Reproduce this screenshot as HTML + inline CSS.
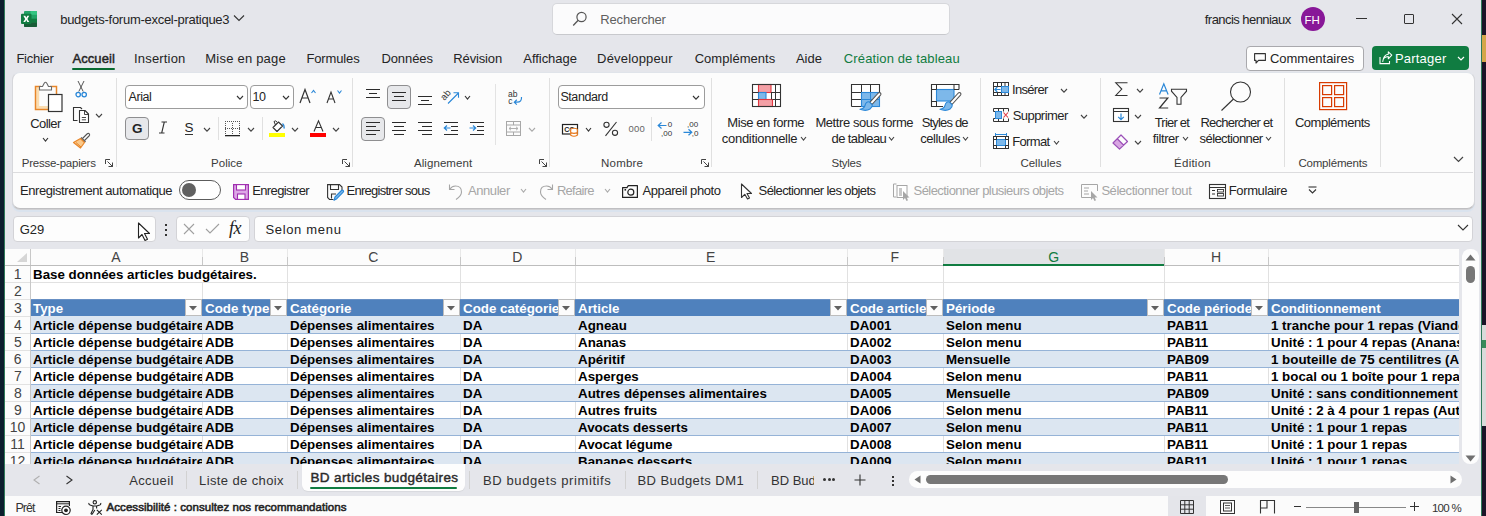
<!DOCTYPE html>
<html><head><meta charset="utf-8"><style>
*{margin:0;padding:0;box-sizing:content-box}
html,body{width:1486px;height:516px;overflow:hidden;background:#E5E6EB;font-family:"Liberation Sans",sans-serif}
.r{position:absolute}
.s{position:absolute;overflow:visible}
.t{position:absolute;line-height:1;white-space:nowrap}
.c{position:absolute;height:16px;line-height:17px;padding-left:2px;box-sizing:border-box;overflow:hidden;white-space:nowrap;font-weight:bold;font-size:13.33px}
</style></head><body>
<div class="r" style="left:0px;top:0px;width:4px;height:516px;background:#0c1e2d;"></div>
<div class="r" style="left:4px;top:0px;width:1px;height:516px;background:#2f7a5a;"></div>
<div class="r" style="left:1481px;top:0px;width:1px;height:516px;background:#2f7a5a;"></div>
<div class="r" style="left:1482px;top:0px;width:4px;height:516px;background:#1c1428;"></div>
<div class="r" style="left:1482px;top:35px;width:4px;height:27px;background:#D5A64A;"></div>
<div class="r" style="left:1482px;top:325px;width:4px;height:101px;background:#DADADA;"></div>
<div class="r" style="left:1482px;top:340px;width:4px;height:8px;background:#3a8a5a;"></div>
<svg class="s" style="left:21px;top:10px;" width="17" height="18" viewBox="0 0 17 18"><rect x="3" y="1" width="13" height="16" rx="1" fill="#21A366"/><rect x="9.5" y="1" width="6.5" height="3.8" fill="#33C481"/><rect x="3" y="8.7" width="13" height="4" fill="#107C41"/><path d="M3 12.6 H16 V16 Q16 17 15 17 H4 Q3 17 3 16 Z" fill="#185C37"/><rect x="0" y="3.8" width="10.5" height="10.2" rx="1" fill="#107C41"/><path d="M2.3 5.8 H4.3 L5.3 7.8 L6.3 5.8 H8.2 L6.4 8.9 L8.3 12 H6.3 L5.3 10 L4.2 12 H2.3 L4.2 8.9 Z" fill="#fff"/></svg>
<div class="t " style="left:60.20px;top:13.00px;font-size:13px;color:#242424;letter-spacing:-0.275px;">budgets-forum-excel-pratique3</div>
<svg class="s" style="left:233px;top:14px;" width="12" height="8" viewBox="0 0 12 8"><path d="M1 1.5 L6 6.5 L11 1.5" fill="none" stroke="#333" stroke-width="1.1"/></svg>
<div class="r" style="left:552px;top:3px;width:396px;height:30px;background:#FBFBFC;border:1px solid #D6D7DB;border-bottom-color:#C8C9CD;border-radius:5px"></div>
<svg class="s" style="left:572px;top:11px;" width="16" height="16" viewBox="0 0 16 16"><circle cx="9.5" cy="6" r="4.6" fill="none" stroke="#555" stroke-width="1.2"/><path d="M6.2 9.3 L1.2 14.5" stroke="#555" stroke-width="1.3"/></svg>
<div class="t " style="left:600.30px;top:13.00px;font-size:13px;color:#5f5f5f;letter-spacing:-0.178px;">Rechercher</div>
<div class="t " style="left:1204.80px;top:13.00px;font-size:13px;color:#242424;letter-spacing:-0.553px;">francis henniaux</div>
<div class="r" style="left:1301px;top:7px;width:24px;height:24px;border-radius:50%;background:#881798"></div>
<div class="t " style="left:1304.60px;top:15.00px;font-size:11.5px;color:#fff;">FH</div>
<div class="r" style="left:1356px;top:18px;width:11px;height:1px;background:#333;"></div>
<div class="r" style="left:1404px;top:14px;width:8px;height:8px;border:1.1px solid #333;border-radius:1px"></div>
<svg class="s" style="left:1451px;top:13px;" width="12" height="12" viewBox="0 0 12 12"><path d="M1 1 L11 11 M11 1 L1 11" stroke="#333" stroke-width="1.1"/></svg>
<div class="t " style="left:16.40px;top:52.00px;font-size:13px;color:#242424;letter-spacing:-0.250px;">Fichier</div>
<div class="t " style="left:72.40px;top:52.00px;font-size:13px;color:#242424;letter-spacing:0.100px;-webkit-text-stroke:0.45px #242424;">Accueil</div>
<div class="t " style="left:134.10px;top:52.00px;font-size:13px;color:#242424;letter-spacing:0.162px;">Insertion</div>
<div class="t " style="left:205.30px;top:52.00px;font-size:13px;color:#242424;letter-spacing:0.218px;">Mise en page</div>
<div class="t " style="left:306.40px;top:52.00px;font-size:13px;color:#242424;letter-spacing:-0.129px;">Formules</div>
<div class="t " style="left:381.40px;top:52.00px;font-size:13px;color:#242424;letter-spacing:-0.083px;">Données</div>
<div class="t " style="left:453.30px;top:52.00px;font-size:13px;color:#242424;letter-spacing:-0.143px;">Révision</div>
<div class="t " style="left:523.30px;top:52.00px;font-size:13px;color:#242424;letter-spacing:-0.050px;">Affichage</div>
<div class="t " style="left:597.10px;top:52.00px;font-size:13px;color:#242424;letter-spacing:0.180px;">Développeur</div>
<div class="t " style="left:694.70px;top:52.00px;font-size:13px;color:#242424;letter-spacing:0.030px;">Compléments</div>
<div class="t " style="left:795.90px;top:52.00px;font-size:13px;color:#242424;letter-spacing:0.033px;">Aide</div>
<div class="t " style="left:843.80px;top:52.00px;font-size:13px;color:#107C41;letter-spacing:0.133px;">Création de tableau</div>
<div class="r" style="left:72px;top:68px;width:43px;height:2px;border-radius:1px;background:#08692F"></div>
<div class="r" style="left:1246px;top:46px;width:116px;height:23px;background:#FDFDFD;border:1px solid #A9A9AD;border-radius:4px"></div>
<svg class="s" style="left:1254px;top:53px;" width="13" height="12" viewBox="0 0 13 12"><path d="M0.6 0.6 H11.4 V7.4 H4.5 L2 10 V7.4 H0.6 Z" fill="none" stroke="#333" stroke-width="1.1" stroke-linejoin="round"/></svg>
<div class="t " style="left:1270.00px;top:52.00px;font-size:13px;color:#242424;letter-spacing:-0.027px;">Commentaires</div>
<div class="r" style="left:1372px;top:46px;width:97px;height:24px;background:#107C41;border-radius:4px"></div>
<svg class="s" style="left:1379px;top:51px;" width="14" height="14" viewBox="0 0 14 14"><path d="M1 6 V12.6 H10.5 V10" fill="none" stroke="#fff" stroke-width="1.1"/><path d="M3.8 10.5 Q4 6 9.3 5.6 V7.8 L12.8 4.2 L9.3 0.8 V3.2 Q4.5 3.6 3.8 10.5 Z" fill="none" stroke="#fff" stroke-width="1.05" stroke-linejoin="round"/></svg>
<div class="t " style="left:1394.90px;top:52.00px;font-size:13px;color:#fff;letter-spacing:0.214px;">Partager</div>
<svg class="s" style="left:1457px;top:56px;" width="8" height="5" viewBox="0 0 8 5"><path d="M1 1 L4 4 L7 1" fill="none" stroke="#fff" stroke-width="1.2"/></svg>
<div class="r" style="left:12px;top:72px;width:1461px;height:135px;background:#FCFCFC;border:1px solid #D6D7DB;border-top-color:#E0E4EA;border-bottom-color:#BFBFC2;border-radius:8px;box-shadow:0 1px 0 #D0D0D3,0 3px 0 #DAE3EE"></div>
<div class="r" style="left:13px;top:172px;width:1460px;height:1px;background:#DCDCDE;"></div>
<div class="r" style="left:116px;top:78px;width:1px;height:89px;background:#E0E0E0;"></div>
<div class="r" style="left:352px;top:78px;width:1px;height:89px;background:#E0E0E0;"></div>
<div class="r" style="left:549px;top:78px;width:1px;height:89px;background:#E0E0E0;"></div>
<div class="r" style="left:711px;top:78px;width:1px;height:89px;background:#E0E0E0;"></div>
<div class="r" style="left:980px;top:78px;width:1px;height:89px;background:#E0E0E0;"></div>
<div class="r" style="left:1100px;top:78px;width:1px;height:89px;background:#E0E0E0;"></div>
<div class="r" style="left:1284px;top:78px;width:1px;height:89px;background:#E0E0E0;"></div>
<div class="r" style="left:1380px;top:78px;width:1px;height:89px;background:#E0E0E0;"></div>
<div class="r" style="left:495px;top:84px;width:1px;height:61px;background:#E3E3E3;"></div>
<div class="r" style="left:218px;top:117px;width:1px;height:23px;background:#E0E0E0;"></div>
<div class="r" style="left:262px;top:117px;width:1px;height:23px;background:#E0E0E0;"></div>
<div class="r" style="left:651px;top:117px;width:1px;height:24px;background:#E0E0E0;"></div>
<div class="t " style="left:21.80px;top:158.00px;font-size:11.5px;color:#3b3b3b;letter-spacing:-0.246px;">Presse-papiers</div>
<div class="t " style="left:211.10px;top:158.00px;font-size:11.5px;color:#3b3b3b;letter-spacing:0.020px;">Police</div>
<div class="t " style="left:414.00px;top:158.00px;font-size:11.5px;color:#3b3b3b;letter-spacing:0.067px;">Alignement</div>
<div class="t " style="left:601.10px;top:158.00px;font-size:11.5px;color:#3b3b3b;letter-spacing:0.200px;">Nombre</div>
<div class="t " style="left:831.50px;top:158.00px;font-size:11.5px;color:#3b3b3b;letter-spacing:-0.280px;">Styles</div>
<div class="t " style="left:1020.40px;top:158.00px;font-size:11.5px;color:#3b3b3b;letter-spacing:0.014px;">Cellules</div>
<div class="t " style="left:1174.10px;top:158.00px;font-size:11.5px;color:#3b3b3b;letter-spacing:0.233px;">Édition</div>
<div class="t " style="left:1298.40px;top:158.00px;font-size:11.5px;color:#3b3b3b;letter-spacing:-0.190px;">Compléments</div>
<svg class="s" style="left:105px;top:159px;" width="9" height="9" viewBox="0 0 9 9"><path d="M0.5 5 V0.5 H5 M2.5 2.5 L7.8 7.8 M7.5 3.5 V7.5 H3.5" fill="none" stroke="#444" stroke-width="1"/></svg>
<svg class="s" style="left:342px;top:159px;" width="9" height="9" viewBox="0 0 9 9"><path d="M0.5 5 V0.5 H5 M2.5 2.5 L7.8 7.8 M7.5 3.5 V7.5 H3.5" fill="none" stroke="#444" stroke-width="1"/></svg>
<svg class="s" style="left:539px;top:159px;" width="9" height="9" viewBox="0 0 9 9"><path d="M0.5 5 V0.5 H5 M2.5 2.5 L7.8 7.8 M7.5 3.5 V7.5 H3.5" fill="none" stroke="#444" stroke-width="1"/></svg>
<svg class="s" style="left:701px;top:159px;" width="9" height="9" viewBox="0 0 9 9"><path d="M0.5 5 V0.5 H5 M2.5 2.5 L7.8 7.8 M7.5 3.5 V7.5 H3.5" fill="none" stroke="#444" stroke-width="1"/></svg>
<svg class="s" style="left:34px;top:80px;" width="30" height="33" viewBox="0 0 30 33"><rect x="2.2" y="7.2" width="3" height="21.6" fill="#FBDDB0"/><rect x="2.2" y="26" width="12" height="2.8" fill="#FBDDB0"/><path d="M7 6.5 H1.5 V29.5 H14 M16 6.5 H22.5 V14" fill="none" stroke="#E8862A" stroke-width="1.5"/><path d="M5.5 10 V6.5 H8.5 L10.2 3.2 Q11.5 1.2 12.8 3.2 L14.5 6.5 H17.5 V10 Z" fill="#fff" stroke="#6a6a6a" stroke-width="1.1" stroke-linejoin="round"/><rect x="14.5" y="14.5" width="13.5" height="17" fill="#fff" stroke="#333" stroke-width="1.2"/></svg>
<div class="t " style="left:30.20px;top:117.00px;font-size:13px;color:#242424;letter-spacing:-0.580px;">Coller</div>
<svg class="s" style="left:42px;top:137px;" width="7" height="5" viewBox="0 0 7 5"><path d="M1 1 L3.5 4.2 L6 1" fill="none" stroke="#333" stroke-width="1.1"/></svg>
<svg class="s" style="left:75px;top:80px;" width="12" height="18" viewBox="0 0 12 18"><path d="M3 1 L8.2 11.5 M9 1 L3.8 11.5" stroke="#555" stroke-width="1"/><circle cx="3.2" cy="14.6" r="2.2" fill="none" stroke="#2B88D8" stroke-width="1.3"/><circle cx="9.2" cy="14.6" r="2.2" fill="none" stroke="#2B88D8" stroke-width="1.3"/></svg>
<svg class="s" style="left:72px;top:106px;" width="18" height="18" viewBox="0 0 18 18"><path d="M5.5 14.5 H1.5 V1.5 H8.5 L10 3" fill="none" stroke="#333" stroke-width="1.1"/><path d="M7.5 4.5 H13 L16.5 8 V16.5 H7.5 Z" fill="#fff" stroke="#333" stroke-width="1.1" stroke-linejoin="round"/><path d="M12.5 4.5 V8.5 H16.5 M9.8 11.5 H14 M9.8 13.8 H14" fill="none" stroke="#333" stroke-width="0.9"/></svg>
<svg class="s" style="left:95px;top:113px;" width="8" height="5" viewBox="0 0 8 5"><path d="M1 1 L4.0 4.2 L7 1" fill="none" stroke="#444" stroke-width="1.1"/></svg>
<svg class="s" style="left:72px;top:132px;" width="18" height="17" viewBox="0 0 18 17"><path d="M10.5 6.5 L15 2 Q16.3 0.8 17.3 1.8 Q18.2 2.8 17 4 L12.5 8.5" fill="#fff" stroke="#555" stroke-width="1.1"/><path d="M9 5.5 L13.5 10" stroke="#555" stroke-width="1.3"/><path d="M1.5 10.5 L8.5 6.5 L12.5 10.5 L8.5 16 Z" fill="#FBC98A" stroke="#E8862A" stroke-width="1.2" stroke-linejoin="round"/><path d="M4 10.5 L9 15" stroke="#E8862A" stroke-width="1"/></svg>
<div class="r" style="left:125px;top:85px;width:121px;height:22px;background:#fff;border:1px solid #9C9C9C;border-radius:4px"></div>
<div class="t " style="left:128.50px;top:91.00px;font-size:12.5px;color:#242424;letter-spacing:-0.425px;">Arial</div>
<svg class="s" style="left:236px;top:95px;" width="8" height="5" viewBox="0 0 8 5"><path d="M1 1 L4.0 4.2 L7 1" fill="none" stroke="#333" stroke-width="1.1"/></svg>
<div class="r" style="left:250px;top:85px;width:42px;height:22px;background:#fff;border:1px solid #9C9C9C;border-radius:4px"></div>
<div class="t " style="left:252.60px;top:91.00px;font-size:12.5px;color:#242424;letter-spacing:-0.600px;">10</div>
<svg class="s" style="left:282px;top:95px;" width="8" height="5" viewBox="0 0 8 5"><path d="M1 1 L4.0 4.2 L7 1" fill="none" stroke="#333" stroke-width="1.1"/></svg>
<svg class="s" style="left:299px;top:88px;" width="18" height="16" viewBox="0 0 18 16"><path d="M1 15 L6 1.5 L11 15 M3 10 H9" fill="none" stroke="#333" stroke-width="1.2"/><path d="M12.5 5 L14.5 2.5 L16.5 5" fill="none" stroke="#2B88D8" stroke-width="1.1"/></svg>
<svg class="s" style="left:326px;top:89px;" width="18" height="15" viewBox="0 0 18 15"><path d="M1 14 L5 3 L9 14 M2.6 10 H7.4" fill="none" stroke="#333" stroke-width="1.1"/><path d="M11.5 1.5 L13.5 4 L15.5 1.5" fill="none" stroke="#2B88D8" stroke-width="1.1"/></svg>
<div class="r" style="left:125px;top:117px;width:22px;height:21px;background:#E7E8EB;border:1px solid #8E8E90;border-radius:4px"></div>
<div class="t " style="left:131.90px;top:122.00px;font-size:13.5px;color:#242424;font-weight:bold;">G</div>
<svg class="s" style="left:158px;top:121px;" width="10" height="13" viewBox="0 0 10 13"><path d="M3.5 1 H9 M1 12 H6.5 M6.3 1 L3.7 12" fill="none" stroke="#333" stroke-width="1.1"/></svg>
<div class="t " style="left:184.40px;top:121.00px;font-size:13.5px;color:#242424;">S</div>
<div class="r" style="left:185px;top:134px;width:8px;height:1px;background:#333;"></div>
<svg class="s" style="left:203px;top:127px;" width="8" height="5" viewBox="0 0 8 5"><path d="M1 1 L4.0 4.2 L7 1" fill="none" stroke="#444" stroke-width="1.1"/></svg>
<svg class="s" style="left:225px;top:121px;" width="15" height="15" viewBox="0 0 15 15"><rect x="0" y="0" width="1" height="1" fill="#555"/><rect x="2" y="0" width="1" height="1" fill="#555"/><rect x="4" y="0" width="1" height="1" fill="#555"/><rect x="6" y="0" width="1" height="1" fill="#555"/><rect x="8" y="0" width="1" height="1" fill="#555"/><rect x="10" y="0" width="1" height="1" fill="#555"/><rect x="12" y="0" width="1" height="1" fill="#555"/><rect x="14" y="0" width="1" height="1" fill="#555"/><rect x="0" y="7" width="1" height="1" fill="#555"/><rect x="2" y="7" width="1" height="1" fill="#555"/><rect x="4" y="7" width="1" height="1" fill="#555"/><rect x="6" y="7" width="1" height="1" fill="#555"/><rect x="8" y="7" width="1" height="1" fill="#555"/><rect x="10" y="7" width="1" height="1" fill="#555"/><rect x="12" y="7" width="1" height="1" fill="#555"/><rect x="14" y="7" width="1" height="1" fill="#555"/><rect x="0" y="14" width="1" height="1" fill="#555"/><rect x="2" y="14" width="1" height="1" fill="#555"/><rect x="4" y="14" width="1" height="1" fill="#555"/><rect x="6" y="14" width="1" height="1" fill="#555"/><rect x="8" y="14" width="1" height="1" fill="#555"/><rect x="10" y="14" width="1" height="1" fill="#555"/><rect x="12" y="14" width="1" height="1" fill="#555"/><rect x="14" y="14" width="1" height="1" fill="#555"/><rect x="0" y="2" width="1" height="1" fill="#555"/><rect x="0" y="4" width="1" height="1" fill="#555"/><rect x="0" y="6" width="1" height="1" fill="#555"/><rect x="0" y="8" width="1" height="1" fill="#555"/><rect x="0" y="10" width="1" height="1" fill="#555"/><rect x="0" y="12" width="1" height="1" fill="#555"/><rect x="7" y="2" width="1" height="1" fill="#555"/><rect x="7" y="4" width="1" height="1" fill="#555"/><rect x="7" y="6" width="1" height="1" fill="#555"/><rect x="7" y="8" width="1" height="1" fill="#555"/><rect x="7" y="10" width="1" height="1" fill="#555"/><rect x="7" y="12" width="1" height="1" fill="#555"/><rect x="14" y="2" width="1" height="1" fill="#555"/><rect x="14" y="4" width="1" height="1" fill="#555"/><rect x="14" y="6" width="1" height="1" fill="#555"/><rect x="14" y="8" width="1" height="1" fill="#555"/><rect x="14" y="10" width="1" height="1" fill="#555"/><rect x="14" y="12" width="1" height="1" fill="#555"/><rect x="0" y="14" width="15" height="1.3" fill="#222"/></svg>
<svg class="s" style="left:247px;top:127px;" width="8" height="5" viewBox="0 0 8 5"><path d="M1 1 L4.0 4.2 L7 1" fill="none" stroke="#444" stroke-width="1.1"/></svg>
<svg class="s" style="left:270px;top:120px;" width="16" height="13" viewBox="0 0 16 13"><path d="M3 7.5 L8.5 2 L12.5 6 L7 11.5 Z" fill="#fff" stroke="#333" stroke-width="1.1" stroke-linejoin="round"/><path d="M5.5 5 L4 1.5 Q5.5 0 7 2" fill="none" stroke="#333" stroke-width="1"/><path d="M12.5 3.5 Q14.5 5 14.2 8.5" fill="none" stroke="#2B88D8" stroke-width="1.5"/></svg>
<div class="r" style="left:269px;top:133px;width:16px;height:4px;background:#FFFF00;"></div>
<svg class="s" style="left:291px;top:127px;" width="8" height="5" viewBox="0 0 8 5"><path d="M1 1 L4.0 4.2 L7 1" fill="none" stroke="#444" stroke-width="1.1"/></svg>
<svg class="s" style="left:313px;top:120px;" width="11" height="12" viewBox="0 0 11 12"><path d="M1 11.5 L5.5 0.8 L10 11.5 M2.8 7.5 H8.2" fill="none" stroke="#333" stroke-width="1.1"/></svg>
<div class="r" style="left:310px;top:133px;width:16px;height:4px;background:#FF0000;"></div>
<svg class="s" style="left:332px;top:127px;" width="8" height="5" viewBox="0 0 8 5"><path d="M1 1 L4.0 4.2 L7 1" fill="none" stroke="#444" stroke-width="1.1"/></svg>
<div class="r" style="left:387px;top:85px;width:22px;height:22px;background:#E7E8EB;border:1px solid #8E8E90;border-radius:4px"></div>
<div class="r" style="left:361px;top:117px;width:22px;height:22px;background:#E7E8EB;border:1px solid #8E8E90;border-radius:4px"></div>
<div class="r" style="left:366px;top:89px;width:14px;height:1px;background:#2b2b2b;"></div>
<div class="r" style="left:369px;top:93px;width:8px;height:1px;background:#2b2b2b;"></div>
<div class="r" style="left:366px;top:97px;width:14px;height:1px;background:#2b2b2b;"></div>
<div class="r" style="left:392px;top:92px;width:14px;height:1px;background:#2b2b2b;"></div>
<div class="r" style="left:394px;top:96px;width:10px;height:1px;background:#2b2b2b;"></div>
<div class="r" style="left:392px;top:100px;width:14px;height:1px;background:#2b2b2b;"></div>
<div class="r" style="left:418px;top:96px;width:14px;height:1px;background:#2b2b2b;"></div>
<div class="r" style="left:421px;top:100px;width:8px;height:1px;background:#2b2b2b;"></div>
<div class="r" style="left:418px;top:104px;width:14px;height:1px;background:#2b2b2b;"></div>
<svg class="s" style="left:441px;top:87px;" width="20" height="19" viewBox="0 0 20 19"><text x="0" y="0" font-size="9.5" font-family="Liberation Sans" fill="#333" transform="translate(3.5 14) rotate(-50)">ab</text><path d="M7 16.5 L17 6.5 M12.5 5.8 H17.5 V10.8" fill="none" stroke="#2B88D8" stroke-width="1.1"/></svg>
<svg class="s" style="left:464px;top:95px;" width="7" height="5" viewBox="0 0 7 5"><path d="M1 1 L3.5 4.2 L6 1" fill="none" stroke="#333" stroke-width="1.1"/></svg>
<div class="r" style="left:366px;top:122px;width:14px;height:1px;background:#2b2b2b;"></div>
<div class="r" style="left:366px;top:126px;width:10px;height:1px;background:#2b2b2b;"></div>
<div class="r" style="left:366px;top:130px;width:14px;height:1px;background:#2b2b2b;"></div>
<div class="r" style="left:366px;top:134px;width:10px;height:1px;background:#2b2b2b;"></div>
<div class="r" style="left:392px;top:122px;width:14px;height:1px;background:#2b2b2b;"></div>
<div class="r" style="left:394px;top:126px;width:10px;height:1px;background:#2b2b2b;"></div>
<div class="r" style="left:392px;top:130px;width:14px;height:1px;background:#2b2b2b;"></div>
<div class="r" style="left:394px;top:134px;width:10px;height:1px;background:#2b2b2b;"></div>
<div class="r" style="left:418px;top:122px;width:14px;height:1px;background:#2b2b2b;"></div>
<div class="r" style="left:422px;top:126px;width:10px;height:1px;background:#2b2b2b;"></div>
<div class="r" style="left:418px;top:130px;width:14px;height:1px;background:#2b2b2b;"></div>
<div class="r" style="left:422px;top:134px;width:10px;height:1px;background:#2b2b2b;"></div>
<div class="r" style="left:444px;top:122px;width:14px;height:1px;background:#2b2b2b;"></div>
<div class="r" style="left:451px;top:126px;width:7px;height:1px;background:#2b2b2b;"></div>
<div class="r" style="left:451px;top:130px;width:7px;height:1px;background:#2b2b2b;"></div>
<div class="r" style="left:444px;top:134px;width:14px;height:1px;background:#2b2b2b;"></div>
<svg class="s" style="left:443px;top:124px;" width="8" height="8" viewBox="0 0 8 8"><path d="M7.5 4 H1.5 M4 1.5 L1.3 4 L4 6.5" fill="none" stroke="#2B88D8" stroke-width="1.2"/></svg>
<div class="r" style="left:470px;top:122px;width:14px;height:1px;background:#2b2b2b;"></div>
<div class="r" style="left:477px;top:126px;width:7px;height:1px;background:#2b2b2b;"></div>
<div class="r" style="left:477px;top:130px;width:7px;height:1px;background:#2b2b2b;"></div>
<div class="r" style="left:470px;top:134px;width:14px;height:1px;background:#2b2b2b;"></div>
<svg class="s" style="left:469px;top:124px;" width="8" height="8" viewBox="0 0 8 8"><path d="M0.5 4 H6.5 M4 1.5 L6.7 4 L4 6.5" fill="none" stroke="#2B88D8" stroke-width="1.2"/></svg>
<svg class="s" style="left:506px;top:88px;" width="18" height="18" viewBox="0 0 18 18"><text x="2" y="8.5" font-size="8.5" font-family="Liberation Sans" fill="#333">ab</text><text x="2.3" y="15.5" font-size="8.5" font-family="Liberation Sans" fill="#333">c</text><path d="M15.5 9 Q16 14 11 14.2 H8.5 M10.8 11.8 L8.3 14.2 L10.8 16.6" fill="none" stroke="#2B88D8" stroke-width="1.2"/></svg>
<svg class="s" style="left:506px;top:121px;" width="16" height="16" viewBox="0 0 16 16"><rect x="0.5" y="0.5" width="14" height="14" fill="none" stroke="#A8A8A8"/><path d="M0.5 4 H14.5 M0.5 11 H14.5 M7.5 0.5 V4 M7.5 11 V14.5" fill="none" stroke="#A8A8A8" stroke-width="1"/><path d="M3 7.5 H12 M5 5.8 L3 7.5 L5 9.2 M10 5.8 L12 7.5 L10 9.2" fill="none" stroke="#B0B0B0" stroke-width="1"/></svg>
<svg class="s" style="left:528px;top:127px;" width="8" height="5" viewBox="0 0 8 5"><path d="M1 1 L4.0 4.2 L7 1" fill="none" stroke="#AAA" stroke-width="1.1"/></svg>
<div class="r" style="left:558px;top:85px;width:145px;height:22px;background:#fff;border:1px solid #9C9C9C;border-radius:4px"></div>
<div class="t " style="left:560.40px;top:91.00px;font-size:12.5px;color:#242424;letter-spacing:-0.414px;">Standard</div>
<svg class="s" style="left:692px;top:95px;" width="8" height="5" viewBox="0 0 8 5"><path d="M1 1 L4.0 4.2 L7 1" fill="none" stroke="#333" stroke-width="1.1"/></svg>
<svg class="s" style="left:561px;top:123px;" width="19" height="15" viewBox="0 0 19 15"><rect x="1.5" y="1.5" width="15" height="9.5" fill="#fff" stroke="#222" stroke-width="1.2"/><text x="3.2" y="9" font-size="7" font-family="Liberation Sans" font-weight="bold" fill="#222">CO</text><ellipse cx="13" cy="6.8" rx="3.3" ry="1.5" fill="#fff" stroke="#E8781A" stroke-width="1.1"/><path d="M9.7 6.8 V12.3 Q13 14.3 16.3 12.3 V6.8 M9.7 9.5 Q13 11.3 16.3 9.5" fill="#fff" stroke="#E8781A" stroke-width="1.1"/></svg>
<svg class="s" style="left:585px;top:127px;" width="7" height="5" viewBox="0 0 7 5"><path d="M1 1 L3.5 4.2 L6 1" fill="none" stroke="#333" stroke-width="1.1"/></svg>
<svg class="s" style="left:603px;top:121px;" width="16" height="16" viewBox="0 0 16 16"><circle cx="3.5" cy="3.8" r="2.6" fill="none" stroke="#333" stroke-width="1.1"/><circle cx="12" cy="11.8" r="2.6" fill="none" stroke="#333" stroke-width="1.1"/><path d="M13.5 1 L2.5 14.8" stroke="#333" stroke-width="1.1"/></svg>
<div class="t " style="left:628.60px;top:124.00px;font-size:9.5px;color:#666;letter-spacing:0.200px;">000</div>
<svg class="s" style="left:657px;top:121px;" width="17" height="16" viewBox="0 0 17 16"><path d="M9.5 4.5 H1.5 M4.5 1.5 L1.2 4.5 L4.5 7.5" fill="none" stroke="#2B88D8" stroke-width="1.2"/><text x="10.8" y="6.3" font-size="8" font-family="Liberation Sans" fill="#333">0</text><text x="4" y="14.5" font-size="8" font-family="Liberation Sans" fill="#333">,00</text></svg>
<svg class="s" style="left:683px;top:121px;" width="17" height="16" viewBox="0 0 17 16"><text x="4" y="6.3" font-size="8" font-family="Liberation Sans" fill="#333">,00</text><path d="M0.5 11.3 H8.5 M5.5 8.3 L8.8 11.3 L5.5 14.3" fill="none" stroke="#2B88D8" stroke-width="1.2"/><text x="8.8" y="14.5" font-size="8" font-family="Liberation Sans" fill="#333">,0</text></svg>
<svg class="s" style="left:752px;top:84px;" width="30" height="24" viewBox="0 0 30 24"><rect x="0.5" y="0.5" width="28" height="22" fill="#fff"/><rect x="6.5" y="0.5" width="12.5" height="8" fill="#F4A0A6" stroke="#E2373F" stroke-width="1.1"/><rect x="6.5" y="8.5" width="7.5" height="7" fill="#7DB8EA" stroke="#2B88D8" stroke-width="1.1"/><rect x="6.5" y="15.5" width="14" height="7" fill="#F4A0A6" stroke="#E2373F" stroke-width="1.1"/><path d="M0.5 8.5 H6.5 M19 8.5 H28.5 M0.5 15.5 H6.5 M20.5 15.5 H28.5 M19.5 8.5 V15.5 M23.5 0.5 V22.5" stroke="#333" stroke-width="1" fill="none"/><rect x="0.5" y="0.5" width="28" height="22" fill="none" stroke="#333" stroke-width="1.1"/></svg>
<div class="t " style="left:727.30px;top:116.00px;font-size:13px;color:#242424;letter-spacing:-0.425px;">Mise en forme</div>
<div class="t " style="left:721.80px;top:132.00px;font-size:13px;color:#242424;letter-spacing:-0.292px;">conditionnelle</div>
<svg class="s" style="left:800px;top:136px;" width="7" height="5" viewBox="0 0 7 5"><path d="M1 1 L3.5 4.2 L6 1" fill="none" stroke="#444" stroke-width="1.1"/></svg>
<svg class="s" style="left:851px;top:84px;" width="32" height="28" viewBox="0 0 32 28"><rect x="0.5" y="0.5" width="28" height="22" fill="#fff"/><path d="M0.5 8.5 H10.5 M0.5 15.5 H10.5 M10.5 0.5 V22.5 M19.5 0.5 V8.5 M0.5 22.5 H10.5" stroke="#333" stroke-width="1" fill="none"/><rect x="10.5" y="8.5" width="18" height="14" fill="#7DB8EA" stroke="#2B88D8" stroke-width="1.1"/><path d="M10.5 15.5 H28.5 M19.5 8.5 V22.5" stroke="#2B88D8" stroke-width="1" fill="none"/><path d="M0.5 22.5 V0.5 H28.5 V8.5" fill="none" stroke="#333" stroke-width="1.1"/><path d="M29.5 9 Q30.5 10 29.5 11.2 L21 20.5 L18.8 18.3 L27.3 9 Q28.5 8 29.5 9 Z" fill="#fff" stroke="#555" stroke-width="1.1" stroke-linejoin="round"/><path d="M18.2 17.8 Q15 17.5 14 21.5 Q13.2 24.5 9 25.3 Q15 27.5 19 25 Q21.5 23 21.3 20.8 Z" fill="#7DB8EA" stroke="#2B88D8" stroke-width="1.1" stroke-linejoin="round"/></svg>
<div class="t " style="left:815.40px;top:116.00px;font-size:13px;color:#242424;letter-spacing:-0.413px;">Mettre sous forme</div>
<div class="t " style="left:831.50px;top:132.00px;font-size:13px;color:#242424;letter-spacing:-0.600px;">de tableau</div>
<svg class="s" style="left:888px;top:136px;" width="7" height="5" viewBox="0 0 7 5"><path d="M1 1 L3.5 4.2 L6 1" fill="none" stroke="#444" stroke-width="1.1"/></svg>
<svg class="s" style="left:931px;top:84px;" width="32" height="28" viewBox="0 0 32 28"><rect x="0.5" y="0.5" width="27.5" height="22" fill="#fff"/><rect x="5.5" y="5.5" width="17.5" height="11.5" fill="#7DB8EA" stroke="#2B88D8" stroke-width="1.1"/><path d="M0.5 5.5 H5.5 M23 5.5 H28 M0.5 17.5 H5.5 M5.5 0.5 V5.5 M23 0.5 V5.5 M5.5 17 V22.5" stroke="#333" stroke-width="1" fill="none"/><path d="M28 5.5 V0.5 H0.5 V22.5 H12" fill="none" stroke="#333" stroke-width="1.1"/><path d="M29.5 9 Q30.5 10 29.5 11.2 L21 20.5 L18.8 18.3 L27.3 9 Q28.5 8 29.5 9 Z" fill="#fff" stroke="#555" stroke-width="1.1" stroke-linejoin="round"/><path d="M18.2 17.8 Q15 17.5 14 21.5 Q13.2 24.5 9 25.3 Q15 27.5 19 25 Q21.5 23 21.3 20.8 Z" fill="#7DB8EA" stroke="#2B88D8" stroke-width="1.1" stroke-linejoin="round"/></svg>
<div class="t " style="left:921.70px;top:116.00px;font-size:13px;color:#242424;letter-spacing:-0.825px;">Styles de</div>
<div class="t " style="left:920.20px;top:132.00px;font-size:13px;color:#242424;letter-spacing:-0.443px;">cellules</div>
<svg class="s" style="left:962px;top:136px;" width="7" height="5" viewBox="0 0 7 5"><path d="M1 1 L3.5 4.2 L6 1" fill="none" stroke="#444" stroke-width="1.1"/></svg>
<svg class="s" style="left:993px;top:82px;" width="16" height="17" viewBox="0 0 16 17"><rect x="0.5" y="0.5" width="15" height="13" fill="#fff" stroke="#333" stroke-width="1" fill="none"/><path d="M0.5 4.5 H15.5 M0.5 10.5 H15.5 M8.5 0.5 V13.5 M4.5 0.5 V4.5 M4.5 10.5 V13.5 M12 0.5 V4.5 M12 10.5 V13.5" stroke="#333" stroke-width="1" fill="none"/><rect x="8.5" y="4.5" width="7" height="6" fill="#7DB8EA" stroke="#2B88D8"/><path d="M7.5 7.5 H1.8 M4.3 5 L1.8 7.5 L4.3 10" fill="none" stroke="#2B88D8" stroke-width="1.2"/></svg>
<div class="t " style="left:1012.10px;top:83.00px;font-size:13px;color:#242424;letter-spacing:-0.717px;">Insérer</div>
<svg class="s" style="left:1060px;top:88px;" width="8" height="5" viewBox="0 0 8 5"><path d="M1 1 L4.0 4.2 L7 1" fill="none" stroke="#444" stroke-width="1.1"/></svg>
<svg class="s" style="left:993px;top:108px;" width="16" height="17" viewBox="0 0 16 17"><path d="M0.5 0.5 H15.5 M0.5 0.5 V3.5 M5.5 0.5 V3.5 M10.5 0.5 V3.5 M15.5 0.5 V3.5 M0.5 13.5 H15.5 M0.5 10.5 V13.5 M5.5 10.5 V13.5 M10.5 10.5 V13.5 M15.5 10.5 V13.5 M0.5 3.5 H2.5 M0.5 10.5 H2.5" stroke="#333" stroke-width="1" fill="none"/><rect x="2.5" y="3.5" width="6" height="7" fill="#7DB8EA" stroke="#2B88D8"/><path d="M10.5 4.5 L15 9.5 M15 4.5 L10.5 9.5" stroke="#E2373F" stroke-width="1.1"/></svg>
<div class="t " style="left:1012.70px;top:109.00px;font-size:13px;color:#242424;letter-spacing:-0.550px;">Supprimer</div>
<svg class="s" style="left:1080px;top:114px;" width="8" height="5" viewBox="0 0 8 5"><path d="M1 1 L4.0 4.2 L7 1" fill="none" stroke="#444" stroke-width="1.1"/></svg>
<svg class="s" style="left:993px;top:133px;" width="16" height="17" viewBox="0 0 16 17"><path d="M2.5 0 V3 M13.5 0 V3 M2.5 1.5 H13.5" stroke="#2B88D8" stroke-width="1" fill="none"/><rect x="0.5" y="3.5" width="15" height="12" fill="#fff" stroke="#333" stroke-width="1" fill="none"/><rect x="3.5" y="6.5" width="9" height="6" fill="#7DB8EA" stroke="#2B88D8"/><path d="M0.5 6.5 H3.5 M12.5 6.5 H15.5 M0.5 12.5 H3.5 M12.5 12.5 H15.5 M3.5 3.5 V6.5 M12.5 3.5 V6.5 M3.5 12.5 V15.5 M12.5 12.5 V15.5" stroke="#333" stroke-width="1" fill="none"/></svg>
<div class="t " style="left:1012.20px;top:135.00px;font-size:13px;color:#242424;letter-spacing:-0.660px;">Format</div>
<svg class="s" style="left:1053px;top:140px;" width="7" height="5" viewBox="0 0 7 5"><path d="M1 1 L3.5 4.2 L6 1" fill="none" stroke="#444" stroke-width="1.1"/></svg>
<svg class="s" style="left:1115px;top:82px;" width="14" height="15" viewBox="0 0 14 15"><path d="M12.5 0.8 H0.8 L6.8 7 L0.8 13.5 H12.5" fill="none" stroke="#333" stroke-width="1.1" stroke-linejoin="miter"/></svg>
<svg class="s" style="left:1136px;top:88px;" width="8" height="5" viewBox="0 0 8 5"><path d="M1 1 L4.0 4.2 L7 1" fill="none" stroke="#444" stroke-width="1.1"/></svg>
<svg class="s" style="left:1113px;top:108px;" width="17" height="15" viewBox="0 0 17 15"><rect x="0.5" y="0.5" width="15" height="13" fill="#fff" stroke="#333" stroke-width="1.1"/><path d="M0.5 3.5 H15.5" stroke="#333" stroke-width="1"/><path d="M8 5.5 V11.5 M5.2 8.8 L8 11.6 L10.8 8.8" fill="none" stroke="#2B88D8" stroke-width="1.2"/></svg>
<svg class="s" style="left:1134px;top:114px;" width="8" height="5" viewBox="0 0 8 5"><path d="M1 1 L4.0 4.2 L7 1" fill="none" stroke="#444" stroke-width="1.1"/></svg>
<svg class="s" style="left:1112px;top:133px;" width="17" height="17" viewBox="0 0 17 17"><path d="M1.5 10 L5.5 6 L11 11.5 L7.5 15 Z" fill="#D9A6E3"/><path d="M1 10 L9 2 L15.5 8.5 L7.5 16 Z M5.5 6 L11.5 12" fill="none" stroke="#9B4FB8" stroke-width="1.2" stroke-linejoin="round"/></svg>
<svg class="s" style="left:1134px;top:140px;" width="8" height="5" viewBox="0 0 8 5"><path d="M1 1 L4.0 4.2 L7 1" fill="none" stroke="#444" stroke-width="1.1"/></svg>
<svg class="s" style="left:1158px;top:83px;" width="32" height="27" viewBox="0 0 32 27"><path d="M1.5 11.5 L5.8 0.8 L10.1 11.5 M3 7.8 H8.6" fill="none" stroke="#2B88D8" stroke-width="1.2"/><path d="M1.5 15 H9.8 L1.5 25 H10.2" fill="none" stroke="#333" stroke-width="1.2" stroke-linejoin="miter"/><path d="M13.5 6.2 H28.5 V8.2 L23 14.5 V21.2 H19 V14.5 L13.5 8.2 Z" fill="none" stroke="#333" stroke-width="1.1" stroke-linejoin="miter"/></svg>
<div class="t " style="left:1154.70px;top:116.00px;font-size:13px;color:#242424;letter-spacing:-0.800px;">Trier et</div>
<div class="t " style="left:1152.80px;top:132.00px;font-size:13px;color:#242424;letter-spacing:-0.417px;">filtrer</div>
<svg class="s" style="left:1182px;top:136px;" width="7" height="5" viewBox="0 0 7 5"><path d="M1 1 L3.5 4.2 L6 1" fill="none" stroke="#444" stroke-width="1.1"/></svg>
<svg class="s" style="left:1220px;top:81px;" width="32" height="31" viewBox="0 0 32 31"><circle cx="20.5" cy="11" r="10" fill="none" stroke="#333" stroke-width="1.1"/><path d="M13.5 18 L1.5 29.5" stroke="#333" stroke-width="1.1"/></svg>
<div class="t " style="left:1200.40px;top:116.00px;font-size:13px;color:#242424;letter-spacing:-0.742px;">Rechercher et</div>
<div class="t " style="left:1199.60px;top:132.00px;font-size:13px;color:#242424;letter-spacing:-0.591px;">sélectionner</div>
<svg class="s" style="left:1265px;top:136px;" width="7" height="5" viewBox="0 0 7 5"><path d="M1 1 L3.5 4.2 L6 1" fill="none" stroke="#444" stroke-width="1.1"/></svg>
<svg class="s" style="left:1319px;top:82px;" width="29" height="29" viewBox="0 0 29 29"><rect x="0.6" y="0.6" width="27" height="27" fill="none" stroke="#D83B01" stroke-width="1.2"/><rect x="3.6" y="3.6" width="9" height="9" fill="none" stroke="#D83B01" stroke-width="1.2"/><rect x="15.6" y="3.6" width="9" height="9" fill="none" stroke="#D83B01" stroke-width="1.2"/><rect x="3.6" y="15.6" width="9" height="9" fill="none" stroke="#D83B01" stroke-width="1.2"/><rect x="15.6" y="15.6" width="9" height="9" fill="none" stroke="#D83B01" stroke-width="1.2"/></svg>
<div class="t " style="left:1294.90px;top:116.00px;font-size:13px;color:#242424;letter-spacing:-0.480px;">Compléments</div>
<svg class="s" style="left:1453px;top:156px;" width="11" height="7" viewBox="0 0 11 7"><path d="M1 1 L5.5 5.5 L10 1" fill="none" stroke="#444" stroke-width="1.2"/></svg>
<div class="t " style="left:20.10px;top:184.00px;font-size:13px;color:#242424;letter-spacing:-0.436px;">Enregistrement automatique</div>
<div class="r" style="left:179px;top:180px;width:40px;height:18px;border:1px solid #5c5c5c;border-radius:10px;background:#fff"></div>
<div class="r" style="left:182px;top:183px;width:14px;height:14px;border-radius:50%;background:#616161"></div>
<svg class="s" style="left:233px;top:184px;" width="17" height="17" viewBox="0 0 17 17"><path d="M0.6 0.6 H15.4 V15.4 H2.6 L0.6 13.4 Z" fill="#DDA8E6" stroke="#A02FB0" stroke-width="1.2"/><rect x="3.5" y="0.6" width="9" height="5.4" fill="#fff" stroke="#A02FB0" stroke-width="1.1"/><rect x="4.5" y="10" width="7.5" height="5.4" fill="#fff" stroke="#A02FB0" stroke-width="1.1"/></svg>
<div class="t " style="left:252.20px;top:184.00px;font-size:13px;color:#242424;letter-spacing:-0.620px;">Enregistrer</div>
<svg class="s" style="left:327px;top:184px;" width="17" height="17" viewBox="0 0 17 17"><path d="M6.5 15.5 H2.5 L0.6 13.5 V0.6 H12.5 L15 3 V6" fill="none" stroke="#333" stroke-width="1.1"/><path d="M3.5 0.6 V5.5 H11.5 V0.6 M4.5 14.5 V10 H9" fill="none" stroke="#333" stroke-width="1.1"/><path d="M7 16.3 L8 13 L14.5 6.5 Q15.5 5.7 16.3 6.5 Q17 7.3 16.2 8.2 L9.8 14.7 Z" fill="#7DB8EA" stroke="#2B88D8" stroke-width="1.1" stroke-linejoin="round"/></svg>
<div class="t " style="left:346.50px;top:184.00px;font-size:13px;color:#242424;letter-spacing:-0.727px;">Enregistrer sous</div>
<svg class="s" style="left:448px;top:183px;" width="15" height="17" viewBox="0 0 15 17"><path d="M1.5 1.5 V6.5 H6.5 M1.8 6.2 Q4 3 7.5 3 Q13.5 3 13.5 9 Q13.5 13 8 16.5" fill="none" stroke="#A6A6A6" stroke-width="1.1"/></svg>
<div class="t " style="left:468.00px;top:184.00px;font-size:13px;color:#A6A6A6;letter-spacing:-0.433px;">Annuler</div>
<svg class="s" style="left:520px;top:188px;" width="7" height="5" viewBox="0 0 7 5"><path d="M1 1 L3.5 4.2 L6 1" fill="none" stroke="#AAA" stroke-width="1.1"/></svg>
<svg class="s" style="left:538px;top:183px;" width="16" height="17" viewBox="0 0 16 17"><path d="M14.5 1.5 V6.5 H9.5 M14.2 6.2 Q12 3 8.5 3 Q2.5 3 2.5 9 Q2.5 13 8 16.5" fill="none" stroke="#A6A6A6" stroke-width="1.1"/></svg>
<div class="t " style="left:556.90px;top:184.00px;font-size:13px;color:#A6A6A6;letter-spacing:-0.717px;">Refaire</div>
<svg class="s" style="left:604px;top:188px;" width="7" height="5" viewBox="0 0 7 5"><path d="M1 1 L3.5 4.2 L6 1" fill="none" stroke="#AAA" stroke-width="1.1"/></svg>
<svg class="s" style="left:622px;top:185px;" width="17" height="14" viewBox="0 0 17 14"><path d="M0.6 2.6 H5 L6.3 0.6 H15.4 V12.4 H0.6 Z" fill="none" stroke="#222" stroke-width="1.2" stroke-linejoin="round"/><circle cx="8.8" cy="7.2" r="3" fill="none" stroke="#222" stroke-width="1.2"/><rect x="2.5" y="4" width="1.6" height="1.6" fill="#222"/></svg>
<div class="t " style="left:642.50px;top:184.00px;font-size:13px;color:#242424;letter-spacing:-0.415px;">Appareil photo</div>
<svg class="s" style="left:740px;top:183px;" width="13" height="17" viewBox="0 0 13 17"><path d="M1.5 1 V14.5 L4.8 11.3 L7.5 16 L9.5 15 L7 10.5 H11.5 Z" fill="#fff" stroke="#333" stroke-width="1.1" stroke-linejoin="round"/></svg>
<div class="t " style="left:758.60px;top:184.00px;font-size:13px;color:#242424;letter-spacing:-0.609px;">Sélectionner les objets</div>
<svg class="s" style="left:893px;top:183px;" width="18" height="18" viewBox="0 0 18 18"><path d="M3.5 1 H0.5 V14 H3" fill="none" stroke="#A6A6A6" stroke-width="1"/><rect x="4" y="2.5" width="10" height="12" fill="#fff" stroke="#A6A6A6"/><rect x="6" y="5" width="3" height="8" fill="#C8C8C8"/><path d="M10 8 V17 L12 15 L13.5 18 L15 17.3 L13.7 14.5 H16.5 Z" fill="#A6A6A6"/></svg>
<div class="t " style="left:913.60px;top:184.00px;font-size:13px;color:#A6A6A6;letter-spacing:-0.564px;">Sélectionner plusieurs objets</div>
<svg class="s" style="left:1081px;top:183px;" width="18" height="18" viewBox="0 0 18 18"><path d="M10 14.5 H0.5 V1.5 H16.5 V8" fill="none" stroke="#A6A6A6" stroke-width="1"/><path d="M3 5 H8 M3 8 H7 M3 11 H8" stroke="#A6A6A6"/><path d="M10 8 V17 L12 15 L13.5 18 L15 17.3 L13.7 14.5 H16.5 Z" fill="#A6A6A6"/></svg>
<div class="t " style="left:1101.40px;top:184.00px;font-size:13px;color:#A6A6A6;letter-spacing:-0.450px;">Sélectionner tout</div>
<svg class="s" style="left:1209px;top:184px;" width="17" height="15" viewBox="0 0 17 15"><rect x="0.5" y="0.5" width="16" height="14" fill="none" stroke="#333" stroke-width="1.1"/><path d="M0.5 3.5 H16.5 M3 6.5 H6 M3 10 H6" stroke="#333"/><rect x="8.5" y="5.5" width="6" height="2.5" fill="none" stroke="#333" stroke-width="0.9"/><rect x="8.5" y="9.5" width="6" height="2.5" fill="none" stroke="#333" stroke-width="0.9"/></svg>
<div class="t " style="left:1228.80px;top:184.00px;font-size:13px;color:#242424;letter-spacing:-0.378px;">Formulaire</div>
<svg class="s" style="left:1308px;top:186px;" width="9" height="8" viewBox="0 0 9 8"><path d="M0.5 1 H8.5" stroke="#333" stroke-width="1.1"/><path d="M1 3.5 L4.5 7 L8 3.5" fill="none" stroke="#333" stroke-width="1.1"/></svg>
<div class="r" style="left:13px;top:216px;width:141px;height:24px;background:#FDFDFD;border:1px solid #D3D3D7;border-radius:4px"></div>
<div class="t " style="left:19.80px;top:223.00px;font-size:13px;color:#242424;letter-spacing:-0.100px;">G29</div>
<svg class="s" style="left:137px;top:222px;" width="14" height="20" viewBox="0 0 14 20"><path d="M1.5 1 V16 L5 12.5 L8 18.5 L10.5 17.3 L7.5 11.5 H12.5 Z" fill="#fff" stroke="#222" stroke-width="1.1" stroke-linejoin="round"/></svg>
<div class="r" style="left:165px;top:224px;width:2px;height:2px;background:#333;"></div>
<div class="r" style="left:165px;top:229px;width:2px;height:2px;background:#333;"></div>
<div class="r" style="left:165px;top:234px;width:2px;height:2px;background:#333;"></div>
<div class="r" style="left:176px;top:216px;width:72px;height:24px;background:#FDFDFD;border:1px solid #D3D3D7;border-radius:4px"></div>
<svg class="s" style="left:183px;top:223px;" width="12" height="12" viewBox="0 0 12 12"><path d="M1 1 L11 11 M11 1 L1 11" stroke="#A0A0A0" stroke-width="1.1"/></svg>
<svg class="s" style="left:205px;top:223px;" width="15" height="11" viewBox="0 0 15 11"><path d="M1 6 L5 10 L14 1" fill="none" stroke="#A0A0A0" stroke-width="1.1"/></svg>
<div class="t" style="left:229px;top:219px;font-family:'Liberation Serif',serif;font-style:italic;font-size:18px;color:#222;letter-spacing:-0.5px">fx</div>
<div class="r" style="left:254px;top:216px;width:1217px;height:24px;background:#FDFDFD;border:1px solid #D3D3D7;border-radius:4px"></div>
<div class="t " style="left:265.40px;top:223.00px;font-size:13px;color:#242424;letter-spacing:0.678px;">Selon menu</div>
<svg class="s" style="left:1457px;top:224px;" width="12" height="7" viewBox="0 0 12 7"><path d="M1 1 L6 6 L11 1" fill="none" stroke="#333" stroke-width="1.1"/></svg>
<div class="r" style="left:5px;top:249px;width:1454px;height:215px;background:#FFFFFF;"></div>
<div class="r" style="left:5px;top:249px;width:1454px;height:16px;background:#FCFCFC;"></div>
<div class="r" style="left:5px;top:249px;width:25px;height:215px;background:#FCFCFC;"></div>
<div class="r" style="left:944px;top:249px;width:220px;height:16px;background:#E1E3E6;"></div>
<div class="r" style="left:202px;top:249px;width:1px;height:8px;background:#E8E8E8;"></div>
<div class="r" style="left:202px;top:257px;width:1px;height:8px;background:#C8C8C8;"></div>
<div class="r" style="left:287px;top:249px;width:1px;height:8px;background:#E8E8E8;"></div>
<div class="r" style="left:287px;top:257px;width:1px;height:8px;background:#C8C8C8;"></div>
<div class="r" style="left:460px;top:249px;width:1px;height:8px;background:#E8E8E8;"></div>
<div class="r" style="left:460px;top:257px;width:1px;height:8px;background:#C8C8C8;"></div>
<div class="r" style="left:575px;top:249px;width:1px;height:8px;background:#E8E8E8;"></div>
<div class="r" style="left:575px;top:257px;width:1px;height:8px;background:#C8C8C8;"></div>
<div class="r" style="left:847px;top:249px;width:1px;height:8px;background:#E8E8E8;"></div>
<div class="r" style="left:847px;top:257px;width:1px;height:8px;background:#C8C8C8;"></div>
<div class="r" style="left:943px;top:249px;width:1px;height:8px;background:#E8E8E8;"></div>
<div class="r" style="left:943px;top:257px;width:1px;height:8px;background:#C8C8C8;"></div>
<div class="r" style="left:1164px;top:249px;width:1px;height:8px;background:#E8E8E8;"></div>
<div class="r" style="left:1164px;top:257px;width:1px;height:8px;background:#C8C8C8;"></div>
<div class="r" style="left:1268px;top:249px;width:1px;height:8px;background:#E8E8E8;"></div>
<div class="r" style="left:1268px;top:257px;width:1px;height:8px;background:#C8C8C8;"></div>
<div class="r" style="left:30px;top:249px;width:1px;height:215px;background:#C8C8C8;"></div>
<div class="r" style="left:5px;top:265px;width:1454px;height:1px;background:#BDBDBD;"></div>
<div class="r" style="left:943px;top:264px;width:221px;height:2px;background:#107C41;"></div>
<svg class="s" style="left:17px;top:253px;" width="10" height="9" viewBox="0 0 10 9"><path d="M10 0 V9 H0 Z" fill="#D6D6D6"/></svg>
<div class="t " style="left:111.35px;top:250.00px;font-size:14px;color:#444;">A</div>
<div class="t " style="left:239.65px;top:250.00px;font-size:14px;color:#444;">B</div>
<div class="t " style="left:368.35px;top:250.00px;font-size:14px;color:#444;">C</div>
<div class="t " style="left:512.25px;top:250.00px;font-size:14px;color:#444;">D</div>
<div class="t " style="left:706.10px;top:250.00px;font-size:14px;color:#444;">E</div>
<div class="t " style="left:890.45px;top:250.00px;font-size:14px;color:#444;">F</div>
<div class="t " style="left:1048.20px;top:250.00px;font-size:14px;color:#107C41;">G</div>
<div class="t " style="left:1210.95px;top:250.00px;font-size:14px;color:#444;">H</div>
<div class="r" style="left:5px;top:282px;width:25px;height:1px;background:#E2E2E2;"></div>
<div class="t " style="left:13.70px;top:267.00px;font-size:14px;color:#444;">1</div>
<div class="r" style="left:287px;top:266px;width:1px;height:16px;background:#E1E1E1;"></div>
<div class="r" style="left:460px;top:266px;width:1px;height:16px;background:#E1E1E1;"></div>
<div class="r" style="left:575px;top:266px;width:1px;height:16px;background:#E1E1E1;"></div>
<div class="r" style="left:847px;top:266px;width:1px;height:16px;background:#E1E1E1;"></div>
<div class="r" style="left:943px;top:266px;width:1px;height:16px;background:#E1E1E1;"></div>
<div class="r" style="left:1164px;top:266px;width:1px;height:16px;background:#E1E1E1;"></div>
<div class="r" style="left:1268px;top:266px;width:1px;height:16px;background:#E1E1E1;"></div>
<div class="r" style="left:31px;top:282px;width:1428px;height:1px;background:#E1E1E1;"></div>
<div class="r" style="left:5px;top:299px;width:25px;height:1px;background:#E2E2E2;"></div>
<div class="t " style="left:13.90px;top:284.00px;font-size:14px;color:#444;">2</div>
<div class="r" style="left:202px;top:283px;width:1px;height:16px;background:#E1E1E1;"></div>
<div class="r" style="left:287px;top:283px;width:1px;height:16px;background:#E1E1E1;"></div>
<div class="r" style="left:460px;top:283px;width:1px;height:16px;background:#E1E1E1;"></div>
<div class="r" style="left:575px;top:283px;width:1px;height:16px;background:#E1E1E1;"></div>
<div class="r" style="left:847px;top:283px;width:1px;height:16px;background:#E1E1E1;"></div>
<div class="r" style="left:943px;top:283px;width:1px;height:16px;background:#E1E1E1;"></div>
<div class="r" style="left:1164px;top:283px;width:1px;height:16px;background:#E1E1E1;"></div>
<div class="r" style="left:1268px;top:283px;width:1px;height:16px;background:#E1E1E1;"></div>
<div class="r" style="left:31px;top:299px;width:1428px;height:1px;background:#E1E1E1;"></div>
<div class="r" style="left:5px;top:316px;width:25px;height:1px;background:#E2E2E2;"></div>
<div class="t " style="left:13.95px;top:301.00px;font-size:14px;color:#444;">3</div>
<div class="r" style="left:31px;top:299px;width:1428px;height:17px;background:#4F81BD;"></div>
<div class="r" style="left:31px;top:299px;width:1428px;height:1px;background:#6890C4;"></div>
<div class="r" style="left:5px;top:333px;width:25px;height:1px;background:#E2E2E2;"></div>
<div class="t " style="left:13.95px;top:318.00px;font-size:14px;color:#444;">4</div>
<div class="r" style="left:31px;top:316px;width:1428px;height:17px;background:#DCE6F1;"></div>
<div class="r" style="left:31px;top:333px;width:1428px;height:1px;background:#95B3D7;"></div>
<div class="r" style="left:5px;top:350px;width:25px;height:1px;background:#E2E2E2;"></div>
<div class="t " style="left:13.90px;top:335.00px;font-size:14px;color:#444;">5</div>
<div class="r" style="left:202px;top:334px;width:1px;height:16px;background:#E1E1E1;"></div>
<div class="r" style="left:287px;top:334px;width:1px;height:16px;background:#E1E1E1;"></div>
<div class="r" style="left:460px;top:334px;width:1px;height:16px;background:#E1E1E1;"></div>
<div class="r" style="left:575px;top:334px;width:1px;height:16px;background:#E1E1E1;"></div>
<div class="r" style="left:847px;top:334px;width:1px;height:16px;background:#E1E1E1;"></div>
<div class="r" style="left:943px;top:334px;width:1px;height:16px;background:#E1E1E1;"></div>
<div class="r" style="left:1164px;top:334px;width:1px;height:16px;background:#E1E1E1;"></div>
<div class="r" style="left:1268px;top:334px;width:1px;height:16px;background:#E1E1E1;"></div>
<div class="r" style="left:31px;top:350px;width:1428px;height:1px;background:#95B3D7;"></div>
<div class="r" style="left:5px;top:367px;width:25px;height:1px;background:#E2E2E2;"></div>
<div class="t " style="left:13.85px;top:352.00px;font-size:14px;color:#444;">6</div>
<div class="r" style="left:31px;top:351px;width:1428px;height:16px;background:#DCE6F1;"></div>
<div class="r" style="left:31px;top:367px;width:1428px;height:1px;background:#95B3D7;"></div>
<div class="r" style="left:5px;top:384px;width:25px;height:1px;background:#E2E2E2;"></div>
<div class="t " style="left:13.90px;top:369.00px;font-size:14px;color:#444;">7</div>
<div class="r" style="left:202px;top:368px;width:1px;height:16px;background:#E1E1E1;"></div>
<div class="r" style="left:287px;top:368px;width:1px;height:16px;background:#E1E1E1;"></div>
<div class="r" style="left:460px;top:368px;width:1px;height:16px;background:#E1E1E1;"></div>
<div class="r" style="left:575px;top:368px;width:1px;height:16px;background:#E1E1E1;"></div>
<div class="r" style="left:847px;top:368px;width:1px;height:16px;background:#E1E1E1;"></div>
<div class="r" style="left:943px;top:368px;width:1px;height:16px;background:#E1E1E1;"></div>
<div class="r" style="left:1164px;top:368px;width:1px;height:16px;background:#E1E1E1;"></div>
<div class="r" style="left:1268px;top:368px;width:1px;height:16px;background:#E1E1E1;"></div>
<div class="r" style="left:31px;top:384px;width:1428px;height:1px;background:#95B3D7;"></div>
<div class="r" style="left:5px;top:401px;width:25px;height:1px;background:#E2E2E2;"></div>
<div class="t " style="left:13.90px;top:386.00px;font-size:14px;color:#444;">8</div>
<div class="r" style="left:31px;top:385px;width:1428px;height:16px;background:#DCE6F1;"></div>
<div class="r" style="left:31px;top:401px;width:1428px;height:1px;background:#95B3D7;"></div>
<div class="r" style="left:5px;top:418px;width:25px;height:1px;background:#E2E2E2;"></div>
<div class="t " style="left:13.95px;top:403.00px;font-size:14px;color:#444;">9</div>
<div class="r" style="left:202px;top:402px;width:1px;height:16px;background:#E1E1E1;"></div>
<div class="r" style="left:287px;top:402px;width:1px;height:16px;background:#E1E1E1;"></div>
<div class="r" style="left:460px;top:402px;width:1px;height:16px;background:#E1E1E1;"></div>
<div class="r" style="left:575px;top:402px;width:1px;height:16px;background:#E1E1E1;"></div>
<div class="r" style="left:847px;top:402px;width:1px;height:16px;background:#E1E1E1;"></div>
<div class="r" style="left:943px;top:402px;width:1px;height:16px;background:#E1E1E1;"></div>
<div class="r" style="left:1164px;top:402px;width:1px;height:16px;background:#E1E1E1;"></div>
<div class="r" style="left:1268px;top:402px;width:1px;height:16px;background:#E1E1E1;"></div>
<div class="r" style="left:31px;top:418px;width:1428px;height:1px;background:#95B3D7;"></div>
<div class="r" style="left:5px;top:435px;width:25px;height:1px;background:#E2E2E2;"></div>
<div class="t " style="left:9.75px;top:420.00px;font-size:14px;color:#444;">10</div>
<div class="r" style="left:31px;top:419px;width:1428px;height:16px;background:#DCE6F1;"></div>
<div class="r" style="left:31px;top:435px;width:1428px;height:1px;background:#95B3D7;"></div>
<div class="r" style="left:5px;top:452px;width:25px;height:1px;background:#E2E2E2;"></div>
<div class="t " style="left:10.35px;top:437.00px;font-size:14px;color:#444;">11</div>
<div class="r" style="left:202px;top:436px;width:1px;height:16px;background:#E1E1E1;"></div>
<div class="r" style="left:287px;top:436px;width:1px;height:16px;background:#E1E1E1;"></div>
<div class="r" style="left:460px;top:436px;width:1px;height:16px;background:#E1E1E1;"></div>
<div class="r" style="left:575px;top:436px;width:1px;height:16px;background:#E1E1E1;"></div>
<div class="r" style="left:847px;top:436px;width:1px;height:16px;background:#E1E1E1;"></div>
<div class="r" style="left:943px;top:436px;width:1px;height:16px;background:#E1E1E1;"></div>
<div class="r" style="left:1164px;top:436px;width:1px;height:16px;background:#E1E1E1;"></div>
<div class="r" style="left:1268px;top:436px;width:1px;height:16px;background:#E1E1E1;"></div>
<div class="r" style="left:31px;top:452px;width:1428px;height:1px;background:#95B3D7;"></div>
<div class="r" style="left:5px;top:469px;width:25px;height:1px;background:#E2E2E2;"></div>
<div class="t " style="left:9.80px;top:454.00px;font-size:14px;color:#444;">12</div>
<div class="r" style="left:31px;top:453px;width:1428px;height:16px;background:#DCE6F1;"></div>
<div class="r" style="left:31px;top:469px;width:1428px;height:1px;background:#95B3D7;"></div>
<div class="cells">
<div class="c" style="left:31px;top:266px;width:600px;color:#000">Base données articles budgétaires.</div>
<div class="c" style="left:31px;top:300px;width:171px;color:#fff">Type</div>
<div class="r" style="left:185px;top:299px;width:15px;height:15px;background:#FCFCFC;border:1px solid #BDBDBD"></div>
<svg class="s" style="left:189px;top:306px;" width="8" height="5" viewBox="0 0 8 5"><path d="M0 0 H8 L4 4.5 Z" fill="#606060"/></svg>
<div class="c" style="left:203px;top:300px;width:84px;color:#fff">Code type</div>
<div class="r" style="left:270px;top:299px;width:15px;height:15px;background:#FCFCFC;border:1px solid #BDBDBD"></div>
<svg class="s" style="left:274px;top:306px;" width="8" height="5" viewBox="0 0 8 5"><path d="M0 0 H8 L4 4.5 Z" fill="#606060"/></svg>
<div class="c" style="left:288px;top:300px;width:172px;color:#fff">Catégorie</div>
<div class="r" style="left:443px;top:299px;width:15px;height:15px;background:#FCFCFC;border:1px solid #BDBDBD"></div>
<svg class="s" style="left:447px;top:306px;" width="8" height="5" viewBox="0 0 8 5"><path d="M0 0 H8 L4 4.5 Z" fill="#606060"/></svg>
<div class="c" style="left:461px;top:300px;width:114px;color:#fff">Code catégorie</div>
<div class="r" style="left:558px;top:299px;width:15px;height:15px;background:#FCFCFC;border:1px solid #BDBDBD"></div>
<svg class="s" style="left:562px;top:306px;" width="8" height="5" viewBox="0 0 8 5"><path d="M0 0 H8 L4 4.5 Z" fill="#606060"/></svg>
<div class="c" style="left:576px;top:300px;width:271px;color:#fff">Article</div>
<div class="r" style="left:830px;top:299px;width:15px;height:15px;background:#FCFCFC;border:1px solid #BDBDBD"></div>
<svg class="s" style="left:834px;top:306px;" width="8" height="5" viewBox="0 0 8 5"><path d="M0 0 H8 L4 4.5 Z" fill="#606060"/></svg>
<div class="c" style="left:848px;top:300px;width:95px;color:#fff">Code article</div>
<div class="r" style="left:926px;top:299px;width:15px;height:15px;background:#FCFCFC;border:1px solid #BDBDBD"></div>
<svg class="s" style="left:930px;top:306px;" width="8" height="5" viewBox="0 0 8 5"><path d="M0 0 H8 L4 4.5 Z" fill="#606060"/></svg>
<div class="c" style="left:944px;top:300px;width:220px;color:#fff">Période</div>
<div class="r" style="left:1147px;top:299px;width:15px;height:15px;background:#FCFCFC;border:1px solid #BDBDBD"></div>
<svg class="s" style="left:1151px;top:306px;" width="8" height="5" viewBox="0 0 8 5"><path d="M0 0 H8 L4 4.5 Z" fill="#606060"/></svg>
<div class="c" style="left:1165px;top:300px;width:103px;color:#fff">Code période</div>
<div class="r" style="left:1251px;top:299px;width:15px;height:15px;background:#FCFCFC;border:1px solid #BDBDBD"></div>
<svg class="s" style="left:1255px;top:306px;" width="8" height="5" viewBox="0 0 8 5"><path d="M0 0 H8 L4 4.5 Z" fill="#606060"/></svg>
<div class="c" style="left:1269px;top:300px;width:190px;color:#fff">Conditionnement</div>
<div class="c" style="left:31px;top:317px;width:171px;color:#000">Article dépense budgétaire</div>
<div class="c" style="left:203px;top:317px;width:84px;color:#000">ADB</div>
<div class="c" style="left:288px;top:317px;width:172px;color:#000">Dépenses alimentaires</div>
<div class="c" style="left:461px;top:317px;width:114px;color:#000">DA</div>
<div class="c" style="left:576px;top:317px;width:271px;color:#000">Agneau</div>
<div class="c" style="left:848px;top:317px;width:95px;color:#000">DA001</div>
<div class="c" style="left:944px;top:317px;width:220px;color:#000">Selon menu</div>
<div class="c" style="left:1165px;top:317px;width:103px;color:#000">PAB11</div>
<div class="c" style="left:1269px;top:317px;width:190px;color:#000">1 tranche pour 1 repas (Viande)</div>
<div class="c" style="left:31px;top:334px;width:171px;color:#000">Article dépense budgétaire</div>
<div class="c" style="left:203px;top:334px;width:84px;color:#000">ADB</div>
<div class="c" style="left:288px;top:334px;width:172px;color:#000">Dépenses alimentaires</div>
<div class="c" style="left:461px;top:334px;width:114px;color:#000">DA</div>
<div class="c" style="left:576px;top:334px;width:271px;color:#000">Ananas</div>
<div class="c" style="left:848px;top:334px;width:95px;color:#000">DA002</div>
<div class="c" style="left:944px;top:334px;width:220px;color:#000">Selon menu</div>
<div class="c" style="left:1165px;top:334px;width:103px;color:#000">PAB11</div>
<div class="c" style="left:1269px;top:334px;width:190px;color:#000">Unité : 1 pour 4 repas (Ananas)</div>
<div class="c" style="left:31px;top:351px;width:171px;color:#000">Article dépense budgétaire</div>
<div class="c" style="left:203px;top:351px;width:84px;color:#000">ADB</div>
<div class="c" style="left:288px;top:351px;width:172px;color:#000">Dépenses alimentaires</div>
<div class="c" style="left:461px;top:351px;width:114px;color:#000">DA</div>
<div class="c" style="left:576px;top:351px;width:271px;color:#000">Apéritif</div>
<div class="c" style="left:848px;top:351px;width:95px;color:#000">DA003</div>
<div class="c" style="left:944px;top:351px;width:220px;color:#000">Mensuelle</div>
<div class="c" style="left:1165px;top:351px;width:103px;color:#000">PAB09</div>
<div class="c" style="left:1269px;top:351px;width:190px;color:#000">1 bouteille de 75 centilitres (Apéritif)</div>
<div class="c" style="left:31px;top:368px;width:171px;color:#000">Article dépense budgétaire</div>
<div class="c" style="left:203px;top:368px;width:84px;color:#000">ADB</div>
<div class="c" style="left:288px;top:368px;width:172px;color:#000">Dépenses alimentaires</div>
<div class="c" style="left:461px;top:368px;width:114px;color:#000">DA</div>
<div class="c" style="left:576px;top:368px;width:271px;color:#000">Asperges</div>
<div class="c" style="left:848px;top:368px;width:95px;color:#000">DA004</div>
<div class="c" style="left:944px;top:368px;width:220px;color:#000">Selon menu</div>
<div class="c" style="left:1165px;top:368px;width:103px;color:#000">PAB11</div>
<div class="c" style="left:1269px;top:368px;width:190px;color:#000">1 bocal ou 1 boîte pour 1 repas</div>
<div class="c" style="left:31px;top:385px;width:171px;color:#000">Article dépense budgétaire</div>
<div class="c" style="left:203px;top:385px;width:84px;color:#000">ADB</div>
<div class="c" style="left:288px;top:385px;width:172px;color:#000">Dépenses alimentaires</div>
<div class="c" style="left:461px;top:385px;width:114px;color:#000">DA</div>
<div class="c" style="left:576px;top:385px;width:271px;color:#000">Autres dépenses alimentaires</div>
<div class="c" style="left:848px;top:385px;width:95px;color:#000">DA005</div>
<div class="c" style="left:944px;top:385px;width:220px;color:#000">Mensuelle</div>
<div class="c" style="left:1165px;top:385px;width:103px;color:#000">PAB09</div>
<div class="c" style="left:1269px;top:385px;width:190px;color:#000">Unité : sans conditionnement</div>
<div class="c" style="left:31px;top:402px;width:171px;color:#000">Article dépense budgétaire</div>
<div class="c" style="left:203px;top:402px;width:84px;color:#000">ADB</div>
<div class="c" style="left:288px;top:402px;width:172px;color:#000">Dépenses alimentaires</div>
<div class="c" style="left:461px;top:402px;width:114px;color:#000">DA</div>
<div class="c" style="left:576px;top:402px;width:271px;color:#000">Autres fruits</div>
<div class="c" style="left:848px;top:402px;width:95px;color:#000">DA006</div>
<div class="c" style="left:944px;top:402px;width:220px;color:#000">Selon menu</div>
<div class="c" style="left:1165px;top:402px;width:103px;color:#000">PAB11</div>
<div class="c" style="left:1269px;top:402px;width:190px;color:#000">Unité : 2 à 4 pour 1 repas (Autres)</div>
<div class="c" style="left:31px;top:419px;width:171px;color:#000">Article dépense budgétaire</div>
<div class="c" style="left:203px;top:419px;width:84px;color:#000">ADB</div>
<div class="c" style="left:288px;top:419px;width:172px;color:#000">Dépenses alimentaires</div>
<div class="c" style="left:461px;top:419px;width:114px;color:#000">DA</div>
<div class="c" style="left:576px;top:419px;width:271px;color:#000">Avocats desserts</div>
<div class="c" style="left:848px;top:419px;width:95px;color:#000">DA007</div>
<div class="c" style="left:944px;top:419px;width:220px;color:#000">Selon menu</div>
<div class="c" style="left:1165px;top:419px;width:103px;color:#000">PAB11</div>
<div class="c" style="left:1269px;top:419px;width:190px;color:#000">Unité : 1 pour 1 repas</div>
<div class="c" style="left:31px;top:436px;width:171px;color:#000">Article dépense budgétaire</div>
<div class="c" style="left:203px;top:436px;width:84px;color:#000">ADB</div>
<div class="c" style="left:288px;top:436px;width:172px;color:#000">Dépenses alimentaires</div>
<div class="c" style="left:461px;top:436px;width:114px;color:#000">DA</div>
<div class="c" style="left:576px;top:436px;width:271px;color:#000">Avocat légume</div>
<div class="c" style="left:848px;top:436px;width:95px;color:#000">DA008</div>
<div class="c" style="left:944px;top:436px;width:220px;color:#000">Selon menu</div>
<div class="c" style="left:1165px;top:436px;width:103px;color:#000">PAB11</div>
<div class="c" style="left:1269px;top:436px;width:190px;color:#000">Unité : 1 pour 1 repas</div>
<div class="c" style="left:31px;top:453px;width:171px;color:#000">Article dépense budgétaire</div>
<div class="c" style="left:203px;top:453px;width:84px;color:#000">ADB</div>
<div class="c" style="left:288px;top:453px;width:172px;color:#000">Dépenses alimentaires</div>
<div class="c" style="left:461px;top:453px;width:114px;color:#000">DA</div>
<div class="c" style="left:576px;top:453px;width:271px;color:#000">Bananes desserts</div>
<div class="c" style="left:848px;top:453px;width:95px;color:#000">DA009</div>
<div class="c" style="left:944px;top:453px;width:220px;color:#000">Selon menu</div>
<div class="c" style="left:1165px;top:453px;width:103px;color:#000">PAB11</div>
<div class="c" style="left:1269px;top:453px;width:190px;color:#000">Unité : 1 pour 1 repas</div>
</div>
<div class="r" style="left:1459px;top:249px;width:22px;height:215px;background:#E5E6EB;"></div>
<div class="r" style="left:1462px;top:249px;width:17px;height:215px;background:#FDFDFD;border-radius:8px"></div>
<svg class="s" style="left:1465px;top:254px;" width="11" height="7" viewBox="0 0 11 7"><path d="M5.5 0.5 L10.5 6.5 H0.5 Z" fill="#707070"/></svg>
<div class="r" style="left:1466px;top:266px;width:9px;height:17px;background:#777;border-radius:5px"></div>
<svg class="s" style="left:1465px;top:455px;" width="11" height="7" viewBox="0 0 11 7"><path d="M5.5 6.5 L10.5 0.5 H0.5 Z" fill="#707070"/></svg>
<div class="r" style="left:5px;top:464px;width:1476px;height:31px;background:#E5E6EB;"></div>
<svg class="s" style="left:32px;top:475px;" width="9" height="10" viewBox="0 0 9 10"><path d="M7.5 1 L2 5 L7.5 9" fill="none" stroke="#B0B0B0" stroke-width="1.1"/></svg>
<svg class="s" style="left:65px;top:475px;" width="9" height="10" viewBox="0 0 9 10"><path d="M1.5 1 L7 5 L1.5 9" fill="none" stroke="#333" stroke-width="1.1"/></svg>
<div class="t " style="left:129.20px;top:474.00px;font-size:13px;color:#333;letter-spacing:0.383px;">Accueil</div>
<div class="r" style="left:186px;top:471px;width:1px;height:18px;background:#D2D2D2;"></div>
<div class="t " style="left:199.10px;top:474.00px;font-size:13px;color:#333;letter-spacing:0.385px;">Liste de choix</div>
<div class="r" style="left:297px;top:471px;width:1px;height:18px;background:#D2D2D2;"></div>
<div class="r" style="left:302px;top:464px;width:163px;height:27px;background:#FDFDFD;border-radius:0 0 6px 6px;box-shadow:0 1px 1px rgba(0,0,0,0.06)"></div>
<div class="t " style="left:310.50px;top:471.00px;font-size:13.5px;color:#2a2a2a;letter-spacing:0.364px;-webkit-text-stroke:0.45px #2a2a2a;">BD articles budgétaires</div>
<div class="r" style="left:310px;top:487px;width:147px;height:2px;border-radius:1px;background:#107C41"></div>
<div class="r" style="left:469px;top:471px;width:1px;height:18px;background:#D2D2D2;"></div>
<div class="t " style="left:483.00px;top:474.00px;font-size:13px;color:#333;letter-spacing:0.605px;">BD budgets primitifs</div>
<div class="r" style="left:625px;top:471px;width:1px;height:18px;background:#D2D2D2;"></div>
<div class="t " style="left:637.50px;top:474.00px;font-size:13px;color:#333;letter-spacing:0.438px;">BD Budgets DM1</div>
<div class="r" style="left:757px;top:471px;width:1px;height:18px;background:#D2D2D2;"></div>
<div class="t" style="left:771px;top:474px;width:43px;overflow:hidden;font-size:13px;color:#333">BD Budgets</div>
<div class="r" style="left:823px;top:478px;width:3px;height:3px;border-radius:50%;background:#333"></div>
<div class="r" style="left:827.5px;top:478px;width:3px;height:3px;border-radius:50%;background:#333"></div>
<div class="r" style="left:832px;top:478px;width:3px;height:3px;border-radius:50%;background:#333"></div>
<svg class="s" style="left:854px;top:474px;" width="12" height="12" viewBox="0 0 12 12"><path d="M6 0.5 V11.5 M0.5 6 H11.5" stroke="#333" stroke-width="1.1"/></svg>
<div class="r" style="left:892px;top:476px;width:2px;height:2px;background:#333;"></div>
<div class="r" style="left:892px;top:480px;width:2px;height:2px;background:#333;"></div>
<div class="r" style="left:892px;top:484px;width:2px;height:2px;background:#333;"></div>
<div class="r" style="left:909px;top:471px;width:553px;height:17px;background:#FDFDFD;border-radius:9px"></div>
<svg class="s" style="left:914px;top:475px;" width="7" height="9" viewBox="0 0 7 9"><path d="M0.5 4.5 L6.5 0.5 V8.5 Z" fill="#707070"/></svg>
<div class="r" style="left:926px;top:475px;width:302px;height:9px;background:#777;border-radius:5px"></div>
<svg class="s" style="left:1450px;top:475px;" width="7" height="9" viewBox="0 0 7 9"><path d="M6.5 4.5 L0.5 0.5 V8.5 Z" fill="#707070"/></svg>
<div class="r" style="left:5px;top:496px;width:1476px;height:20px;background:#FBFBFB;"></div>
<div class="t " style="left:15.50px;top:502.00px;font-size:12.5px;color:#333;letter-spacing:-0.967px;">Prêt</div>
<svg class="s" style="left:56px;top:501px;" width="16" height="14" viewBox="0 0 16 14"><path d="M7 11.5 H0.6 V0.6 H13.4 V5" fill="none" stroke="#222" stroke-width="1.2"/><path d="M0.6 2.8 H13.4 M2.5 5.5 H5 M2.5 7.5 H4.5 M2.5 9.5 H4.5" stroke="#222" stroke-width="1"/><circle cx="10" cy="9.3" r="4.2" fill="#fff" stroke="#222" stroke-width="1.2"/><circle cx="10" cy="9.3" r="1.9" fill="#222"/></svg>
<svg class="s" style="left:88px;top:500px;" width="15" height="15" viewBox="0 0 15 15"><circle cx="6.8" cy="2.3" r="1.7" fill="none" stroke="#222" stroke-width="1.1"/><path d="M1 3 Q0.5 4.5 2 5 L5 6 V9.5 L3 13.5 Q3.3 14.5 4.3 14 L6.8 10 M8.6 6 L11.8 5 Q13.2 4.4 12.6 3 M5 6 H8.6 V8.5" fill="none" stroke="#222" stroke-width="1.1" stroke-linejoin="round"/><path d="M8.8 9.8 L13.8 14.6 M13.8 9.8 L8.8 14.6" stroke="#222" stroke-width="1.1"/></svg>
<div class="t " style="left:106.60px;top:502.00px;font-size:11.5px;color:#242424;letter-spacing:0.048px;-webkit-text-stroke:0.55px #242424;">Accessibilité : consultez nos recommandations</div>
<div class="r" style="left:1168px;top:496px;width:38px;height:20px;background:#E4E5EA;"></div>
<svg class="s" style="left:1180px;top:500px;" width="14" height="14" viewBox="0 0 14 14"><path d="M0.5 0.5 H13.5 V13.5 H0.5 Z M0.5 4.8 H13.5 M0.5 9.2 H13.5 M4.8 0.5 V13.5 M9.2 0.5 V13.5" fill="none" stroke="#333" stroke-width="1"/></svg>
<svg class="s" style="left:1220px;top:500px;" width="15" height="14" viewBox="0 0 15 14"><rect x="0.5" y="0.5" width="14" height="13" fill="none" stroke="#333"/><rect x="3.5" y="3" width="8" height="8" fill="none" stroke="#333"/><path d="M5 5.5 H10 M5 8 H10" stroke="#333" stroke-width="0.8"/></svg>
<svg class="s" style="left:1260px;top:500px;" width="15" height="14" viewBox="0 0 15 14"><path d="M0.5 13.5 V0.5 H14.5 V13.5 M0.5 8 H7 V0.5" fill="none" stroke="#333" stroke-width="1.1"/></svg>
<div class="r" style="left:1294px;top:506px;width:7px;height:1px;background:#333;"></div>
<div class="r" style="left:1306px;top:507px;width:100px;height:1px;background:#888;"></div>
<div class="r" style="left:1354px;top:502px;width:5px;height:11px;background:#666;"></div>
<svg class="s" style="left:1410px;top:502px;" width="9" height="9" viewBox="0 0 9 9"><path d="M4.5 0 V9 M0 4.5 H9" stroke="#333" stroke-width="1"/></svg>
<div class="t " style="left:1431.90px;top:503.00px;font-size:11.5px;color:#333;letter-spacing:-0.675px;">100 %</div>
</body></html>
